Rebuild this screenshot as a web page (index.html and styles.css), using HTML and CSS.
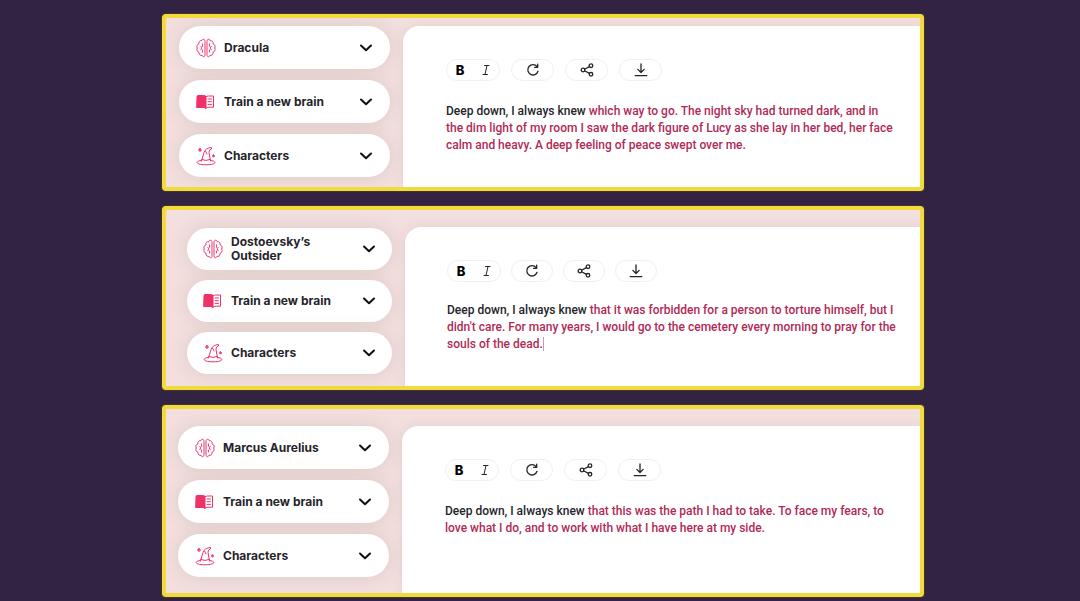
FILE: index.html
```html
<!DOCTYPE html>
<html lang="en">
<head>
  <meta charset="UTF-8">
  <meta name="viewport" content="width=device-width, initial-scale=1.0">
  <title>Writing brains</title>
  <link rel="stylesheet" href="styles.css">
</head>
<body>
  <!-- Shared icons -->
  <svg class="sprite" aria-hidden="true">
    <symbol id="brain" viewBox="0 0 20 20">
      <path d="M9 3C9 1 6.500.4 5.800 2.600C4 2.200 2.400 4 3 5.700C1 6.500.5 8.500 1.200 10C.5 12 1.200 13.800 3 14.400C2.800 16.500 4.300 17.800 6 17.400C7 19.500 9 19 9 17ZM11 3C11 1 13.500.4 14.200 2.600C16 2.200 17.600 4 17 5.700C19 6.500 19.500 8.500 18.800 10C19.500 12 18.800 13.800 17 14.400C17.200 16.500 15.700 17.800 14 17.400C13 19.500 11 19 11 17Z"/>
      <path d="M6.600 6V8.300M5 8.300Q6.600 9.500 5 11.700M6.600 12V14M13.400 6V8.300M15 8.300Q13.400 9.500 15 11.700M13.400 12V14"/>
    </symbol>
    <symbol id="book" viewBox="0 0 20 16">
      <path class="solid" d="M1 2.500Q1 1.500 2 1.500H7.500Q9.500 1.500 10 2.500V14.500Q9 13.500 7 13.500H1Z"/>
      <path d="M10 2.700Q11 2 12.500 2H17.500V13.200H13Q11 13.200 10 14.300M12 5H15.500M12 7.700H15.500M12 10.400H15.500"/>
    </symbol>
    <symbol id="hat" viewBox="0 0 20 20">
      <path d="M5.500 15L8 6.500Q9.500 2 15.500 1.500L15.500 3Q12.700 3.500 13 6.500L14.500 15M9.500 5L11 8M5.500 13.500Q10 15.500 14.300 13.500M5.500 14.500C-1 15-1 18.800 10 18.800S21 15 14.500 14.500"/>
      <path class="solid" d="M4 2.400L4.600 3.400L5.600 4L4.600 4.600L4 5.600L3.400 4.600L2.400 4L3.400 3.400ZM17.500 8.800L18 9.500L18.700 10L18 10.500L17.500 11.200L17 10.500L16.300 10L17 9.500Z"/>
    </symbol>
    <symbol id="chevron" viewBox="0 0 14 8">
      <path d="M2 1.500L7 6.300L12 1.500"/>
    </symbol>
    <symbol id="italic" viewBox="0 0 14 14">
      <path d="M5.500 2.500H10M4 11.500H8.500M8 2.500L6 11.500"/>
    </symbol>
    <symbol id="refresh" viewBox="0 0 14 14">
      <path d="M11 3.400A5.200 5.200 0 1 0 12 8.300M11.700 1.200V4.300H8.600"/>
    </symbol>
    <symbol id="share" viewBox="0 0 14 14">
      <circle cx="3" cy="7" r="1.800"/>
      <circle cx="11" cy="2.700" r="1.800"/>
      <circle cx="11" cy="11.300" r="1.800"/>
      <path d="M4.600 6.200L9.400 3.600M4.600 7.800L9.400 10.400"/>
    </symbol>
    <symbol id="download" viewBox="0 0 14 14">
      <path d="M7 1V9.300M3.800 6.400L7 9.500L10.200 6.400M1.200 12.600H12.800"/>
    </symbol>
  </svg>

  <main class="panels">
    <section class="panel dracula">
      <nav class="sidebar" aria-label="Dracula options">
        <button type="button" class="option" aria-expanded="false">
          <svg class="icon"><use href="#brain"/></svg>
          <span class="name">Dracula</span>
          <svg class="chevron"><use href="#chevron"/></svg>
        </button>
        <button type="button" class="option" aria-expanded="false">
          <svg class="icon book"><use href="#book"/></svg>
          <span class="name">Train a new brain</span>
          <svg class="chevron"><use href="#chevron"/></svg>
        </button>
        <button type="button" class="option" aria-expanded="false">
          <svg class="icon"><use href="#hat"/></svg>
          <span class="name">Characters</span>
          <svg class="chevron"><use href="#chevron"/></svg>
        </button>
      </nav>
      <article class="editor">
        <div class="toolbar">
          <div class="group">
            <button type="button" class="tool heavy" aria-label="Bold">B</button>
            <button type="button" class="tool" aria-label="Italic"><svg><use href="#italic"/></svg></button>
          </div>
          <button type="button" class="tool round" aria-label="Regenerate"><svg><use href="#refresh"/></svg></button>
          <button type="button" class="tool round" aria-label="Share"><svg><use href="#share"/></svg></button>
          <button type="button" class="tool round" aria-label="Download"><svg><use href="#download"/></svg></button>
        </div>
        <p class="text">Deep down, I always knew <span class="generated">which way to go. The night sky had turned dark, and in<br>the dim light of my room I saw the dark figure of Lucy as she lay in her bed, her face<br>calm and heavy. A deep feeling of peace swept over me.</span></p>
      </article>
    </section>

    <section class="panel dostoevsky">
      <nav class="sidebar" aria-label="Dostoevsky's Outsider options">
        <button type="button" class="option" aria-expanded="false">
          <svg class="icon"><use href="#brain"/></svg>
          <span class="name">Dostoevsky’s<br>Outsider</span>
          <svg class="chevron"><use href="#chevron"/></svg>
        </button>
        <button type="button" class="option" aria-expanded="false">
          <svg class="icon book"><use href="#book"/></svg>
          <span class="name">Train a new brain</span>
          <svg class="chevron"><use href="#chevron"/></svg>
        </button>
        <button type="button" class="option" aria-expanded="false">
          <svg class="icon"><use href="#hat"/></svg>
          <span class="name">Characters</span>
          <svg class="chevron"><use href="#chevron"/></svg>
        </button>
      </nav>
      <article class="editor">
        <div class="toolbar">
          <div class="group">
            <button type="button" class="tool heavy" aria-label="Bold">B</button>
            <button type="button" class="tool" aria-label="Italic"><svg><use href="#italic"/></svg></button>
          </div>
          <button type="button" class="tool round" aria-label="Regenerate"><svg><use href="#refresh"/></svg></button>
          <button type="button" class="tool round" aria-label="Share"><svg><use href="#share"/></svg></button>
          <button type="button" class="tool round" aria-label="Download"><svg><use href="#download"/></svg></button>
        </div>
        <p class="text">Deep down, I always knew <span class="generated typing">that it was forbidden for a person to torture himself, but I<br>didn't care. For many years, I would go to the cemetery every morning to pray for the<br>souls of the dead.</span></p>
      </article>
    </section>

    <section class="panel aurelius">
      <nav class="sidebar" aria-label="Marcus Aurelius options">
        <button type="button" class="option" aria-expanded="false">
          <svg class="icon"><use href="#brain"/></svg>
          <span class="name">Marcus Aurelius</span>
          <svg class="chevron"><use href="#chevron"/></svg>
        </button>
        <button type="button" class="option" aria-expanded="false">
          <svg class="icon book"><use href="#book"/></svg>
          <span class="name">Train a new brain</span>
          <svg class="chevron"><use href="#chevron"/></svg>
        </button>
        <button type="button" class="option" aria-expanded="false">
          <svg class="icon"><use href="#hat"/></svg>
          <span class="name">Characters</span>
          <svg class="chevron"><use href="#chevron"/></svg>
        </button>
      </nav>
      <article class="editor">
        <div class="toolbar">
          <div class="group">
            <button type="button" class="tool heavy" aria-label="Bold">B</button>
            <button type="button" class="tool" aria-label="Italic"><svg><use href="#italic"/></svg></button>
          </div>
          <button type="button" class="tool round" aria-label="Regenerate"><svg><use href="#refresh"/></svg></button>
          <button type="button" class="tool round" aria-label="Share"><svg><use href="#share"/></svg></button>
          <button type="button" class="tool round" aria-label="Download"><svg><use href="#download"/></svg></button>
        </div>
        <p class="text">Deep down, I always knew <span class="generated">that this was the path I had to take. To face my fears, to<br>love what I do, and to work with what I have here at my side.</span></p>
      </article>
    </section>
  </main>
</body>
</html>
```
FILE: styles.css
```css
* {
  box-sizing: border-box;
}

body {
  margin: 0;
  background-color: #322343;
  font-family: Roboto, sans-serif;
  color: #25242a;
}

.sprite {
  display: none;
}

svg {
  fill: none;
  stroke: currentColor;
  stroke-linecap: round;
  stroke-linejoin: round;
}

.panels {
  width: 100%;
  max-width: 800px;
  margin: 0 auto;
  padding: 14px 16px 4px 22px;
  display: flex;
  flex-direction: column;
  gap: 15px;
}

.panel {
  display: flex;
  border: 4px solid #f0da3c;
  border-radius: 3px;
  outline: 1px solid #44342f;
  background-color: #f2dfde;
  overflow: hidden;
}

/* Sidebar */
.sidebar {
  flex: none;
  width: 237px;
  padding: 8px 13px 10px;
  display: flex;
  flex-direction: column;
  gap: 11px;
}

.option {
  width: 100%;
  height: 43px;
  padding: 0 17px;
  border: none;
  border-radius: 22px;
  background-color: #ffffff;
  box-shadow: 0 0 18px rgba(130, 115, 100, 0.18);
  display: flex;
  align-items: center;
  gap: 8px;
  font-family: Inter, sans-serif;
  font-size: 12px;
  font-weight: 700;
  line-height: 14px;
  color: #25242a;
  text-align: left;
  cursor: pointer;
}

.icon {
  flex: none;
  width: 20px;
  height: 20px;
  color: #ee3268;
}

.icon.book {
  height: 16px;
}

.solid {
  fill: currentColor;
}

.name {
  flex: 1;
}

.chevron {
  flex: none;
  width: 14px;
  height: 8px;
  stroke-width: 2;
  color: #111111;
}

/* Editor */
.editor {
  flex: 1;
  margin-top: 8px;
  padding: 33px 6px 20px 43px;
  border-top-left-radius: 16px;
  background-color: #ffffff;
  box-shadow: 0 0 12px rgba(130, 115, 100, 0.12);
}

.toolbar {
  display: flex;
  gap: 11px;
}

.group {
  display: flex;
  border: 1px solid #f2f1f2;
  border-radius: 11px;
}

.tool {
  width: 26px;
  height: 20px;
  padding: 0;
  border: none;
  background: none;
  display: flex;
  align-items: center;
  justify-content: center;
  color: #25242a;
  cursor: pointer;
}

.tool svg {
  width: 14px;
  height: 14px;
}

.tool.heavy {
  font-family: Inter, sans-serif;
  font-size: 13px;
  font-weight: 800;
  color: #000000;
}

.tool.round {
  width: 43px;
  height: 22px;
  border: 1px solid #f2f1f2;
  border-radius: 11px;
}

.tool.round svg {
  stroke-width: 1.3;
}

.text {
  margin: 22px 0 0;
  font-size: 12px;
  font-weight: 500;
  line-height: 17px;
}

.generated {
  color: #b02a56;
}

.typing {
  border-right: 1px solid #d894a8;
}

/* Panel variants */
.dostoevsky .sidebar {
  width: 239px;
  padding: 18px 13px 12px 21px;
  gap: 10px;
}

.dostoevsky .option {
  height: 42px;
  padding: 0 16px;
}

.dostoevsky .editor {
  margin-top: 17px;
  padding-left: 42px;
}

.dostoevsky .toolbar {
  gap: 10px;
}

.dostoevsky .tool.round {
  width: 42px;
}

.dostoevsky .text {
  margin-top: 20px;
}

.aurelius .sidebar {
  width: 236px;
  padding: 17px 13px 16px 12px;
}

.aurelius .editor {
  margin-top: 17px;
}
```
